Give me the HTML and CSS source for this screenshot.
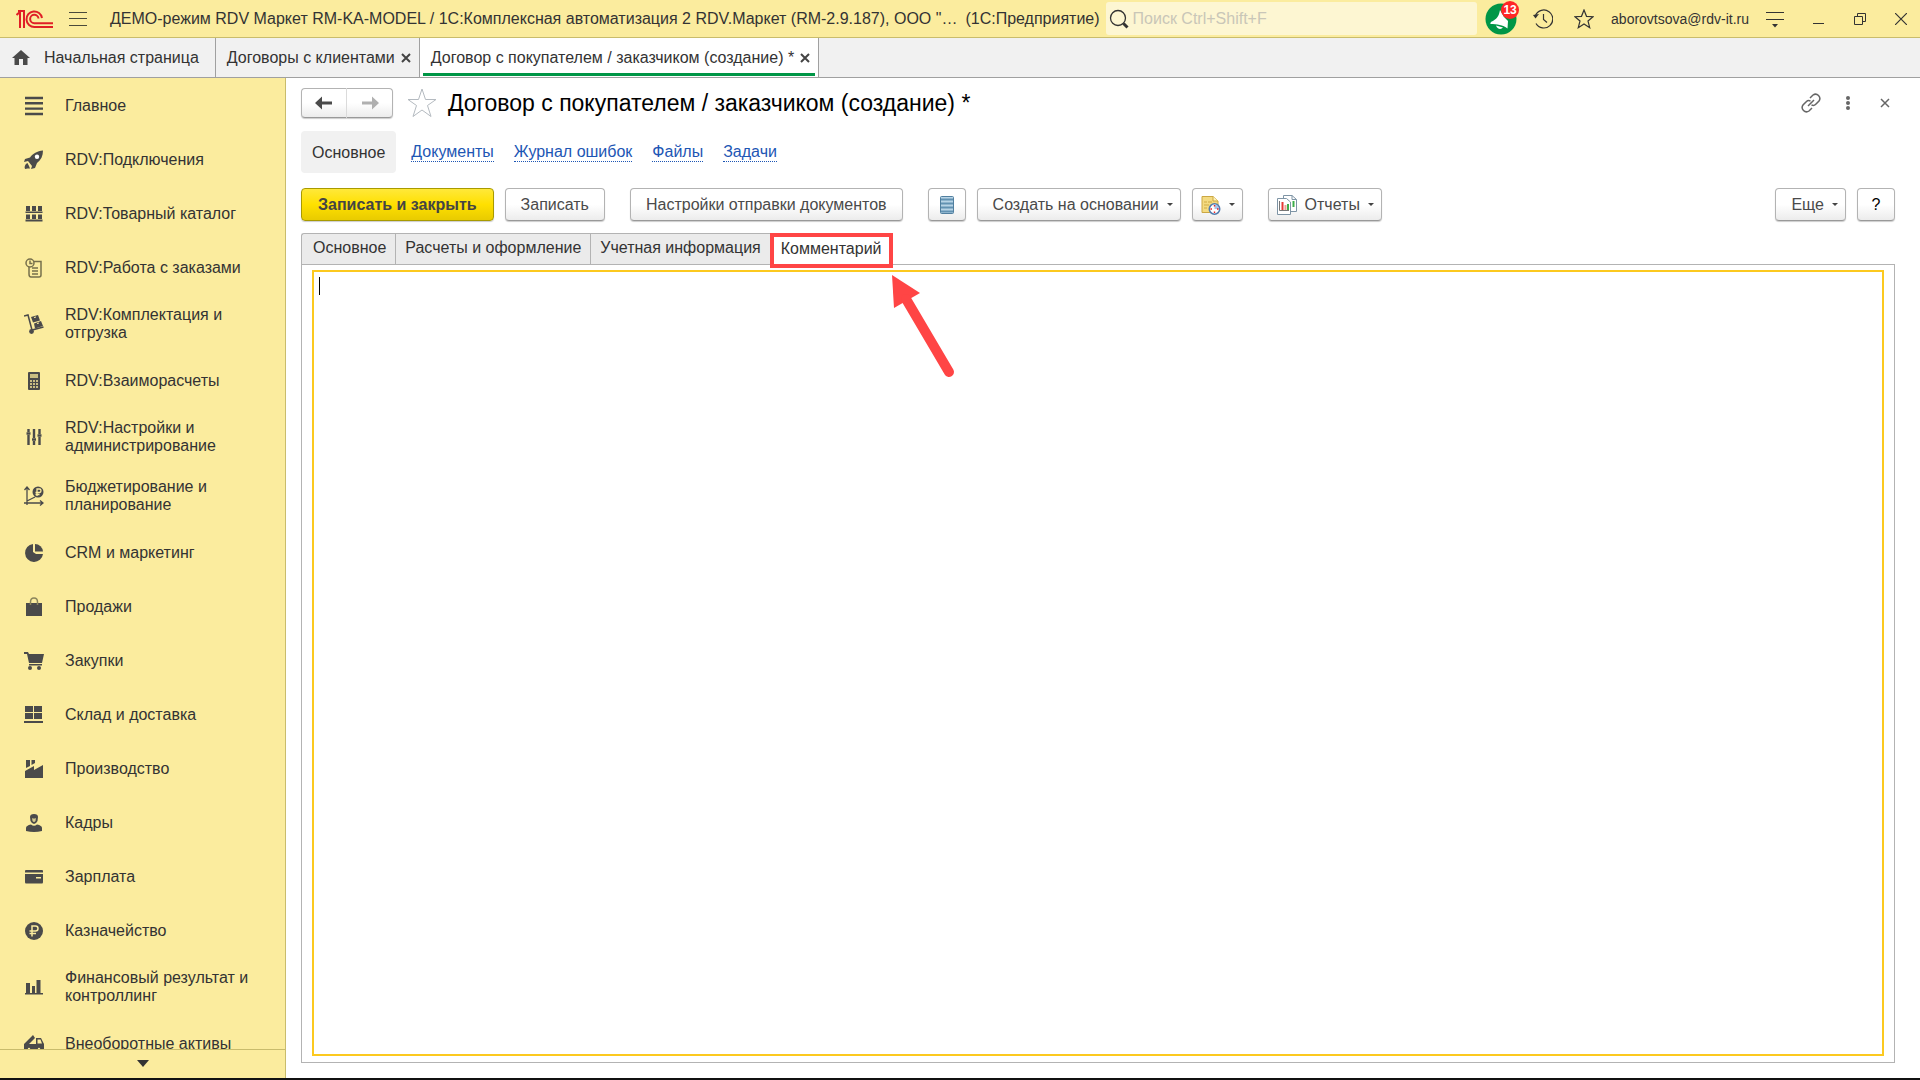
FILE: index.html
```html
<!DOCTYPE html>
<html lang="ru">
  <head>
    <meta charset="UTF-8" />
    <meta name="viewport" content="width=device-width, initial-scale=1.0" />
    <title>Договор с покупателем / заказчиком (создание)</title>
    <link rel="stylesheet" href="styles.css">
  </head>
  <body>
    <div class="app">
      <header class="topbar">
        <svg class="logo" viewBox="0 0 38 20" fill="none" stroke="#e01f26" stroke-width="2">
          <path d="M0.500 6L4 3V19M2 2H8V19" />
          <path d="M26 9A7.800 7.800 0 1 0 18.500 18H37M22.500 9.500A4.200 4.200 0 1 0 18.500 14.200H37" />
        </svg>
        <button class="icon-btn menu-btn" aria-label="Главное меню">
          <svg width="18" height="16" viewBox="0 0 18 16" stroke="#4a4a3a" stroke-width="1"><path d="M0 1.500H18M0 7.500H18M0 14.500H18" /></svg>
        </button>
        <div class="app-title">ДЕМО-режим RDV Маркет RM-KA-MODEL / 1С:Комплексная автоматизация 2 RDV.Маркет (RM-2.9.187), ООО "…</div>
        <div class="app-name">(1С:Предприятие)</div>
        <label class="search">
          <svg width="20" height="20" viewBox="0 0 20 20" fill="none" stroke="#333"><circle cx="9" cy="9" r="7.500" stroke-width="1.300" /><path d="M14.500 14.500L18.500 18.500" stroke-width="3" /></svg>
          <input type="text" placeholder="Поиск Ctrl+Shift+F" aria-label="Поиск" />
        </label>
        <button class="icon-btn notify" aria-label="Уведомления">
          <svg width="32" height="32" viewBox="0 0 32 32"><circle cx="16" cy="16" r="15.500" fill="#009646" /><path d="M15 7L19 14L23 18L22.500 25.500C18 22 12 21 5.500 21C5 20 6 18.500 8 18C13 15 14 12 15 7Z" fill="#fff" /><path d="M11 22.500C12 26 16 27 18 24.500Z" fill="#fff" /></svg>
          <span class="badge">13</span>
        </button>
        <button class="icon-btn history" aria-label="История">
          <svg width="20" height="20" viewBox="0 0 20 20" fill="none" stroke="#333" stroke-width="1.200"><path d="M2.500 6.500A9 9 0 1 1 3 14.500M10.500 5V10.500L14 13.500" /><path d="M0 6L6 5L2.500 9.500Z" fill="#333" stroke="none" /></svg>
        </button>
        <button class="icon-btn favorite" aria-label="Избранное">
          <svg width="20" height="20" viewBox="0 0 20 20" fill="none" stroke="#333" stroke-width="1.200"><path d="M10 1L12.500 7.300L19 7.700L14 12L15.700 18.700L10 15L4.300 18.700L6 12L1 7.700L7.500 7.300Z" /></svg>
        </button>
        <a class="user" href="#">aborovtsova@rdv-it.ru</a>
        <button class="icon-btn settings" aria-label="Сервис и настройки">
          <svg width="18" height="18" viewBox="0 0 18 18"><path d="M0 2.500H18M0 9.500H18" stroke="#333" /><path d="M6 14H12L9 17.500Z" fill="#333" /></svg>
        </button>
        <button class="icon-btn win" aria-label="Свернуть">
          <svg width="12" height="12" viewBox="0 0 12 12" stroke="#333"><path d="M0 10.500H11" /></svg>
        </button>
        <button class="icon-btn win" aria-label="Восстановить">
          <svg width="12" height="12" viewBox="0 0 12 12" fill="none" stroke="#333"><path d="M0.500 3.500H8.500V11.500H0.500ZM3.500 3.500V0.500H11.500V8.500H8.500" /></svg>
        </button>
        <button class="icon-btn win" aria-label="Закрыть">
          <svg width="12" height="12" viewBox="0 0 12 12" stroke="#333" stroke-width="1.200"><path d="M0 0L12 12M12 0L0 12" /></svg>
        </button>
      </header>

      <nav class="window-tabs">
        <a class="window-tab home" href="#">
          <svg width="18" height="15" viewBox="0 0 18 15" fill="#4a4a4a"><path d="M9 0L18 8H15.500V15H11V9H7V15H2.500V8H0Z" /></svg>
          Начальная страница
        </a>
        <div class="window-tab">
          <a href="#">Договоры с клиентами</a>
          <button class="icon-btn" aria-label="Закрыть"><svg width="10" height="10" viewBox="0 0 10 10" stroke="#444" stroke-width="2"><path d="M1 1L9 9M9 1L1 9" /></svg></button>
        </div>
        <div class="window-tab active">
          <a href="#">Договор с покупателем / заказчиком (создание) *</a>
          <button class="icon-btn" aria-label="Закрыть"><svg width="10" height="10" viewBox="0 0 10 10" stroke="#444" stroke-width="2"><path d="M1 1L9 9M9 1L1 9" /></svg></button>
        </div>
      </nav>

      <div class="workspace">
        <aside class="sidebar">
          <nav class="sections">
            <a class="section" href="#"><svg viewBox="0 0 20 20" stroke="#4a4a4a" stroke-width="2.400"><path d="M1 2H19M1 7.300H19M1 12.600H19M1 18H19" /></svg>Главное</a>
            <a class="section" href="#"><svg viewBox="0 0 20 20"><path d="M19 0.500C13 1 9 3.500 6 7.500L1 9L0 12L4 11L8 16L7 19L11 18L13 13C17 10 19 6 19 0.500ZM3.500 13C1 14 0 17 1 19C3 18.500 4 18.500 6 18.500L5 16Z" /><circle cx="13" cy="6.700" r="2.200" fill="#fff" /></svg>RDV:Подключения</a>
            <a class="section" href="#"><svg viewBox="0 0 20 20"><path d="M2 2H6V7H2ZM8 2H12V7H8ZM14 2H18V7H14ZM1.500 7.500H18.500V9H1.500ZM2 10.500H6V15H2ZM8 10.500H12V15H8ZM14 10.500H18V15H14ZM1.500 15.500H18.500V17.500H1.500Z" /></svg>RDV:Товарный каталог</a>
            <a class="section" href="#"><svg viewBox="0 0 20 20" fill="none" stroke="#77704c" stroke-width="1.500"><circle cx="6" cy="5" r="4" /><path d="M6 2.500V5.500H8.500M10 3.500H17V17Q17 19 15 19H7Q5 19 5 16V9M8 10H14M8 13H14M8 16H14" /></svg>RDV:Работа с заказами</a>
            <a class="section" href="#"><svg viewBox="0 0 20 20"><path d="M0 2L4 1L8 16L19.500 13" fill="none" stroke="#4a4a4a" stroke-width="1.500" /><circle cx="7.500" cy="17.500" r="2.400" /><path d="M7 3L14 1L16 6.500L9 8.500ZM10 9.500L17 7L19 12L11 14.500Z" /><path d="M10 3.500L12 3M13 9.500L15 9" stroke="#fbec9e" /></svg>RDV:Комплектация и отгрузка</a>
            <a class="section" href="#"><svg viewBox="0 0 20 20"><rect x="4" y="1" width="12" height="18" rx="1" /><path d="M6 3H14V7H6ZM6 9H8V11H6ZM9 9H11V11H9ZM12 9H14V11H12ZM6 12H8V14H6ZM9 12H11V14H9ZM12 12H14V14H12ZM6 15H8V17H6ZM9 15H11V17H9ZM12 15H14V17H12Z" fill="#c9bd82" /></svg>RDV:Взаиморасчеты</a>
            <a class="section" href="#"><svg viewBox="0 0 20 20" fill="none" stroke="#4a4a4a" stroke-width="2.400"><path d="M4.500 2V5M4.500 8V18M10 2V11M10 14V18M15.500 2V7M15.500 10V18M2.500 6.500H6.500M8 12.500H12M13.500 8.500H17.500" /></svg>RDV:Настройки и администрирование</a>
            <a class="section" href="#"><svg viewBox="0 0 20 20" fill="none" stroke="#4a4a4a" stroke-width="1.300"><path d="M3 19V2M0.500 4L3 1L5.500 4M0 17H18M16 14.500L19 17L16 19.500M3 15L11 11" /><circle cx="14" cy="6" r="5.500" fill="#4a4a4a" stroke="none" /><path d="M13 10V3H15.500Q17 3 17 4.700T15.500 6.500H11.500M11.500 8.500H15.500" stroke="#fbec9e" /></svg>Бюджетирование и планирование</a>
            <a class="section" href="#"><svg viewBox="0 0 20 20"><path d="M9 1A9 9 0 1 0 19 11H12L9 9Z" /><path d="M11 1A8 8 0 0 1 19 8.500H11Z" /></svg>CRM и маркетинг</a>
            <a class="section" href="#"><svg viewBox="0 0 20 20"><path d="M2 6H18V19H2Z" /><path d="M6.500 8V5Q6.500 1 10 1T13.500 5V8" fill="none" stroke="#8b855c" stroke-width="1.500" /></svg>Продажи</a>
            <a class="section" href="#"><svg viewBox="0 0 20 20"><path d="M0 1H4L5 3H20L18 12H5L3 3H0ZM5 13H18V14.500H5Z" /><circle cx="6" cy="17" r="2" /><circle cx="15" cy="17" r="2" /></svg>Закупки</a>
            <a class="section" href="#"><svg viewBox="0 0 20 20"><path d="M1 1H9V7H1ZM10 1H18V7H10ZM1 8H9V14H1ZM10 8H18V14H10ZM0 16H19V18H0Z" /></svg>Склад и доставка</a>
            <a class="section" href="#"><svg viewBox="0 0 20 20"><path d="M1 12L10 7V11L19 6V19H1ZM2 1H6V7L2 9ZM7.500 1H11V4L7.500 6Z" /></svg>Производство</a>
            <a class="section" href="#"><svg viewBox="0 0 20 20"><path d="M6 4Q6 1 10 1T14 4L13.500 8Q12 11 10 11T6.500 8Z" /><path d="M8 5Q10 6 12 5L11.500 8Q10 10 8.500 8Z" fill="#d4c98c" /><path d="M2 18V15Q2 12.500 7 11.500Q10 14 13 11.500Q18 12.500 18 15V18Q10 20 2 18Z" /></svg>Кадры</a>
            <a class="section" href="#"><svg viewBox="0 0 20 20"><path d="M1 4Q1 3 2 3H18Q19 3 19 4V5.500H1ZM1 7H19V15Q19 16.500 18 16.500H2Q1 16.500 1 15Z" /><path d="M12 10H17V11.500H12Z" fill="#fbec9e" /></svg>Зарплата</a>
            <a class="section" href="#"><svg viewBox="0 0 20 20"><circle cx="10" cy="10" r="9" /><path d="M8 15.500V5H11.500Q14 5 14 7.500T11.500 10H5.500M5.500 12.500H12" fill="none" stroke="#fbec9e" stroke-width="1.500" /></svg>Казначейство</a>
            <a class="section" href="#"><svg viewBox="0 0 20 20"><path d="M2 6H6V16H2ZM8 9H11V16H8ZM12.500 3H16.500V16H12.500ZM1 16H19V17.500H1Z" /></svg>Финансовый результат и контроллинг</a>
            <a class="section" href="#"><svg viewBox="0 0 20 20"><path d="M0 10L9 1L11 4L5 10H12V4H17L20 10V15H0ZM13.500 5.500V9.500H18L16.500 5.500Z" fill-rule="evenodd" /><circle cx="5" cy="15" r="3" /><circle cx="15" cy="15" r="3" /><circle cx="5" cy="15" r="1.200" fill="#fbec9e" /><circle cx="15" cy="15" r="1.200" fill="#fbec9e" /></svg>Внеоборотные активы</a>
          </nav>
          <button class="scroll-down" aria-label="Прокрутить вниз">
            <svg width="12" height="8" viewBox="0 0 12 8" fill="#333"><path d="M0 0H12L6 7Z" /></svg>
          </button>
        </aside>

        <main class="form">
          <div class="form-head">
            <div class="history-nav">
              <button aria-label="Назад"><svg width="18" height="14" viewBox="0 0 18 14" fill="#4a4a4a"><path d="M0 7L7 0.500V5.500H17V8.500H7V13.500Z" /></svg></button>
              <button aria-label="Вперед"><svg width="18" height="14" viewBox="0 0 18 14" fill="#b0b0b0"><path d="M18 7L11 0.500V5.500H1V8.500H11V13.500Z" /></svg></button>
            </div>
            <button class="icon-btn form-star" aria-label="Добавить в избранное">
              <svg width="30" height="30" viewBox="0 0 30 30" fill="none" stroke="#b4bac0"><path d="M15 1L18.500 11.500H29L20.500 17.500L24 28.500L15 22L6 28.500L9.500 17.500L1 11.500H11.500Z" /></svg>
            </button>
            <h1 class="form-title">Договор с покупателем / заказчиком (создание) *</h1>
            <div class="form-tools">
              <button class="icon-btn" aria-label="Получить ссылку">
                <svg width="20" height="20" viewBox="0 0 20 20" fill="none" stroke="#666" stroke-width="1.500"><path d="M9 5L12 2Q15 0 17.500 2.500T18 8L14.500 11.500Q13 13 10.500 12M11 15L8 18Q5 20 2.500 17.500T2 12L5.500 8.500Q7 7 9.500 8M7 13L13 7" /></svg>
              </button>
              <button class="icon-btn" aria-label="Дополнительно">
                <svg width="20" height="20" viewBox="0 0 20 20" fill="#666"><circle cx="10" cy="5" r="2" /><circle cx="10" cy="10" r="2" /><circle cx="10" cy="15" r="2" /></svg>
              </button>
              <button class="icon-btn" aria-label="Закрыть форму">
                <svg width="20" height="20" viewBox="0 0 20 20" stroke="#666" stroke-width="1.500"><path d="M6 6L14 14M14 6L6 14" /></svg>
              </button>
            </div>
          </div>

          <nav class="form-links">
            <span class="current">Основное</span>
            <a href="#">Документы</a>
            <a href="#">Журнал ошибок</a>
            <a href="#">Файлы</a>
            <a href="#">Задачи</a>
          </nav>

          <div class="commands">
            <button class="btn primary">Записать и закрыть</button>
            <button class="btn">Записать</button>
            <button class="btn group-start">Настройки отправки документов</button>
            <button class="btn square group-start" aria-label="Структура подчиненности">
              <svg width="14" height="20" viewBox="0 0 14 20"><rect x="0.500" y="1.500" width="13" height="17" rx="1" fill="#b8d4e6" stroke="#517f9f" /><path d="M1 4.500H13M1 8.500H13M1 12.500H13M1 16.500H13" stroke="#6292b2" stroke-width="2" /></svg>
            </button>
            <button class="btn drop">Создать на основании<span class="caret"></span></button>
            <button class="btn drop with-icon" aria-label="Напоминание">
              <svg width="20" height="20" viewBox="0 0 20 20"><path d="M1 1.500H12L17 6V17.500H1Z" fill="#f4db81" stroke="#cba743" /><path d="M12 1.500V6H17" fill="#fff2b8" stroke="#cba743" /><path d="M3 7H6M7 7H11M3 10H8M3 13H6" stroke="#cfab45" /><circle cx="13.500" cy="14" r="5.200" fill="#fff" stroke="#527cae" stroke-width="1.600" /><path d="M13.500 9.500V14H18A4.500 4.500 0 0 0 13.500 9.500Z" fill="#aac4e8" /><path d="M13.500 10V11.500M13.500 16.500V18M9.500 14H11M16 14H17.500" stroke="#e22" stroke-width="1.400" /></svg>
              <span class="caret"></span>
            </button>
            <button class="btn drop with-icon group-start">
              <svg width="20" height="20" viewBox="0 0 20 20"><path d="M6.500 0.500H15L19.500 4.500V16.500H6.500Z" fill="#fff" stroke="#7e94a5" /><path d="M15 0.500V4.500H19.500" fill="none" stroke="#7e94a5" /><path d="M16.500 6V12" stroke="#3eae49" stroke-width="2" /><path d="M0.500 3.500H9.500L13.500 7V19.500H0.500Z" fill="#fff" stroke="#7e94a5" /><path d="M2.500 6V15.500H12" stroke="#777" fill="none" /><path d="M5.500 7V15" stroke="#e53935" stroke-width="2" /><path d="M8.500 10V15" stroke="#e9a095" stroke-width="2" /><path d="M11 9V15" stroke="#3eae49" stroke-width="2" /></svg>
              Отчеты<span class="caret"></span>
            </button>
            <button class="btn drop more">Еще<span class="caret"></span></button>
            <button class="btn square help" aria-label="Справка">?</button>
          </div>

          <div class="pages" role="tablist">
            <button class="page-tab" role="tab">Основное</button>
            <button class="page-tab" role="tab">Расчеты и оформление</button>
            <button class="page-tab" role="tab">Учетная информация</button>
            <button class="page-tab active" role="tab" aria-selected="true">Комментарий
              <svg class="pointer" width="64" height="106" viewBox="0 0 64 106"><path d="M0 0L28 18L2 33Z" fill="#ff4545" /><path d="M14 24L57 97" stroke="#ff4545" stroke-width="10" stroke-linecap="round" /></svg>
            </button>
          </div>
          <div class="page">
            <textarea class="comment" aria-label="Комментарий"></textarea>
            <span class="text-cursor"></span>
          </div>
        </main>
      </div>
    </div>
  </body>
</html>
```
FILE: styles.css
```css
* {
  box-sizing: border-box;
}
html,
body {
  height: 100%;
  margin: 0;
}
body {
  font-family: "Liberation Sans", Arial, sans-serif;
  font-size: 16px;
  line-height: 18px;
  color: #333;
  background: #fff;
}
button,
input,
textarea {
  font: inherit;
  color: inherit;
}
a {
  color: inherit;
  text-decoration: none;
}
svg {
  display: block;
  flex: none;
}
.app {
  display: flex;
  flex-direction: column;
  height: 100vh;
  border-bottom: 2px solid #111;
}
.icon-btn {
  display: flex;
  align-items: center;
  justify-content: center;
  padding: 0;
  border: 0;
  background: none;
}

/* top bar */
.topbar {
  display: flex;
  align-items: center;
  height: 38px;
  flex: none;
  padding: 0 13px 0 16px;
  background: #fbec9e;
  border-bottom: 1px solid #c9bc6c;
}
.logo {
  width: 38px;
  height: 20px;
}
.menu-btn {
  margin: 0 23px 0 15px;
}
.app-title,
.app-name {
  white-space: nowrap;
}
.app-name {
  margin: 0 6px 0 8px;
}
.search {
  display: flex;
  align-items: center;
  flex: 1;
  height: 33px;
  gap: 4px;
  padding: 0 3px;
  border-radius: 3px;
  background: #fdf6d2;
}
.search input {
  flex: 1;
  min-width: 0;
  padding: 0;
  border: 0;
  outline: 0;
  background: none;
}
.search input::placeholder {
  color: #c9c6b8;
}
.notify {
  position: relative;
  margin-left: 8px;
}
.badge {
  position: absolute;
  top: -2px;
  right: -2px;
  width: 18px;
  height: 18px;
  border-radius: 9px;
  background: #ff2626;
  color: #fff;
  font-size: 12px;
  font-weight: bold;
  text-align: center;
}
.history {
  margin-left: 16px;
}
.favorite {
  margin-left: 21px;
}
.user {
  margin: 0 17px;
  font-size: 14px;
}
.win {
  margin-left: 29px;
}

/* open windows */
.window-tabs {
  display: flex;
  height: 40px;
  flex: none;
  background: #f1f1f1;
  border-bottom: 1px solid #a0a0a0;
}
.window-tab {
  display: flex;
  align-items: center;
  gap: 6px;
  padding: 0 8px 0 11px;
  border-right: 1px solid #a0a0a0;
}
.window-tab.home {
  gap: 14px;
  padding: 0 16px 0 12px;
}
.window-tab.active {
  background: #fff;
  box-shadow: inset 3px -1px #fff, inset -3px -1px #fff, inset 0 -4px #009646;
}

/* sections */
.workspace {
  display: flex;
  flex: 1;
  min-height: 0;
}
.sidebar {
  display: flex;
  flex-direction: column;
  width: 286px;
  flex: none;
  background: #fbec9e;
  border-right: 1px solid #c9bc6c;
}
.sections {
  flex: 1;
  min-height: 0;
  overflow: hidden;
}
.section {
  display: flex;
  align-items: center;
  gap: 21px;
  min-height: 54px;
  padding: 12px 30px 11px 24px;
}
.section svg {
  width: 20px;
  height: 20px;
  fill: #4a4a4a;
}
.section svg[fill="none"] {
  fill: none;
}
.scroll-down {
  display: flex;
  align-items: center;
  justify-content: center;
  height: 29px;
  padding: 0;
  border: 0;
  border-top: 1px solid #c9bc6c;
  background: none;
}

/* form */
.form {
  display: flex;
  flex-direction: column;
  flex: 1;
  min-width: 0;
  padding: 10px 25px 15px 15px;
}
.form-head {
  display: flex;
  align-items: center;
  height: 30px;
}
.history-nav {
  display: flex;
  height: 30px;
}
.history-nav button,
.btn {
  display: flex;
  align-items: center;
  justify-content: center;
  border: 1px solid #b3b3b3;
  border-bottom-color: #999;
  border-radius: 4px;
  background: linear-gradient(#fff 50%, #ececec);
  box-shadow: 0 1px 1px #ccc;
}
.history-nav button {
  width: 46px;
  padding: 0;
}
.history-nav button:first-child {
  border-radius: 4px 0 0 4px;
  border-right-color: #ddd;
}
.history-nav button:last-child {
  border-left: 0;
  border-radius: 0 4px 4px 0;
}
.form-star {
  margin: 0 11px 0 14px;
}
.form-title {
  margin: 0;
  color: #000;
  font-size: 23px;
  font-weight: normal;
  line-height: 30px;
}
.form-tools {
  display: flex;
  gap: 17px;
  margin-left: auto;
}
.form-links {
  display: flex;
  align-items: center;
  gap: 20px;
  margin-top: 13px;
  color: #1d56b4;
}
.form-links a {
  border-bottom: 1px dotted #1d56b4;
}
.form-links .current {
  margin-right: -5px;
  padding: 13px 11px 11px;
  border-radius: 4px;
  background: #f1f1f1;
  color: #333;
}
.commands {
  display: flex;
  gap: 11px;
  margin-top: 15px;
}
.btn {
  height: 33px;
  padding: 0 15px;
  color: #4a4a4a;
  white-space: nowrap;
}
.btn.primary {
  padding: 0 16px;
  border-color: #a89a00;
  background: linear-gradient(#ffe83a, #ffe000 50%, #e8cb00);
  color: #444;
  font-weight: bold;
}
.btn.square {
  width: 38px;
  padding: 0;
}
.btn.drop {
  gap: 8px;
  padding-right: 7px;
}
.btn.with-icon {
  padding-left: 8px;
}
.group-start {
  margin-left: 14px;
}
.caret {
  border: 3px solid transparent;
  border-top-color: #444;
  border-bottom: 0;
}
.btn.more {
  margin-left: auto;
}
.btn.help {
  color: #000;
}

/* form pages */
.pages {
  display: flex;
  height: 31px;
  margin-top: 12px;
}
.page-tab {
  padding: 0 9px 2px;
  border: 1px solid #b3b3b3;
  border-right: 0;
  border-bottom: 0;
  background: #ebebeb;
  white-space: nowrap;
}
.page-tab:first-child {
  padding-left: 11px;
  border-top-left-radius: 3px;
}
.page-tab.active {
  position: relative;
  z-index: 1;
  height: 35px;
  padding: 0 7px 4px;
  border: 4px solid #ff4545;
  background: #fff;
}
.pointer {
  position: absolute;
  top: 38px;
  left: 118px;
  pointer-events: none;
}
.page {
  position: relative;
  display: flex;
  flex: 1;
  padding: 5px 10px 6px;
  border: 1px solid #b3b3b3;
}
.comment {
  flex: 1;
  padding: 4px;
  border: 2px solid #fcc91f;
  outline: 0;
  resize: none;
}
.text-cursor {
  position: absolute;
  top: 12px;
  left: 17px;
  width: 1px;
  height: 18px;
  background: #000;
}
```
